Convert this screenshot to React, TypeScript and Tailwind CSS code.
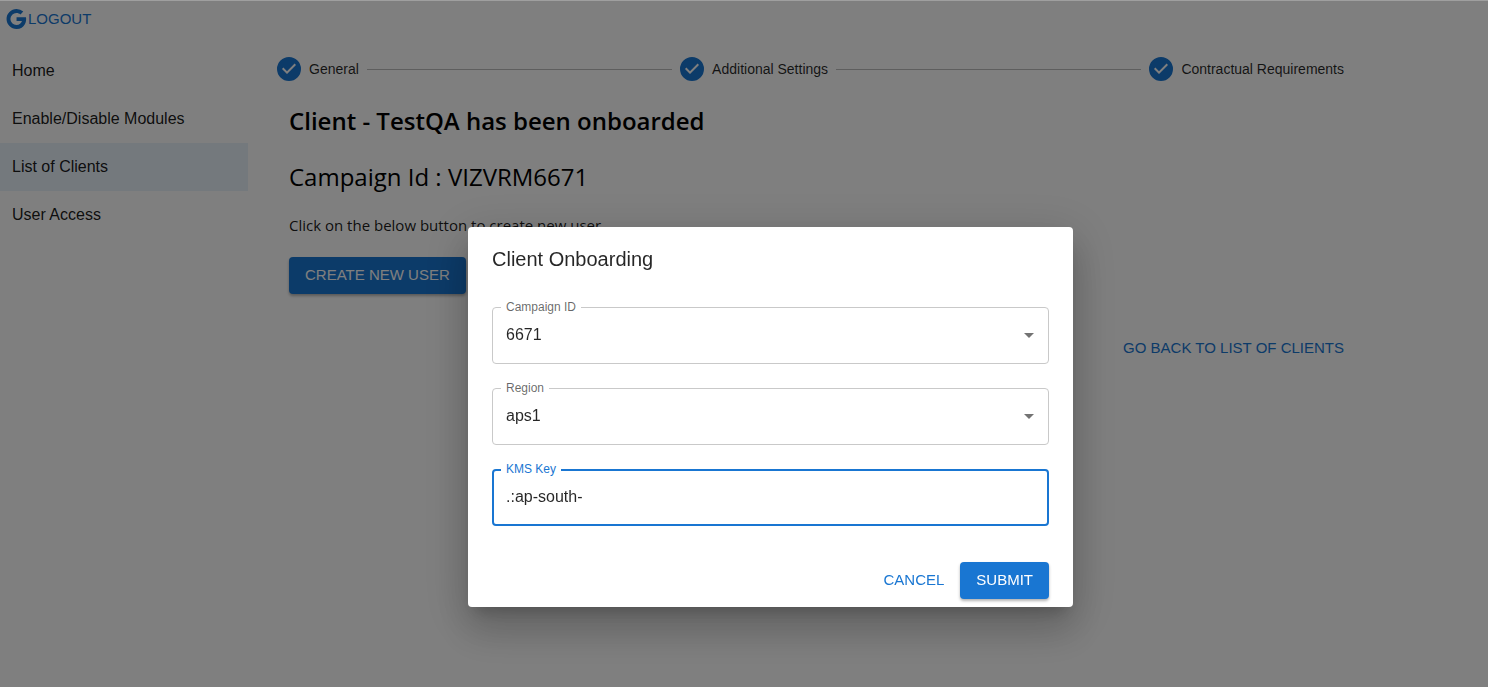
import { Fragment, useState } from "react";
import clsx from "clsx";

const navItems = ["Home", "Enable/Disable Modules", "List of Clients", "User Access"];
const steps = ["General", "Additional Settings", "Contractual Requirements"];

function GoogleIcon() {
  return (
    <svg viewBox="0 0 24 24" className="size-6 shrink-0 fill-current" aria-hidden="true">
      <path d="M12.545 10.239v3.821h5.445c-.712 2.315-2.647 3.972-5.445 3.972a6.033 6.033 0 1 1 0-12.064c1.498 0 2.866.549 3.921 1.453l2.814-2.814A9.969 9.969 0 0 0 12.545 2C7.021 2 2.543 6.477 2.543 12s4.478 10 10.002 10c8.396 0 10.249-7.85 9.426-11.748l-9.426-.013z" />
    </svg>
  );
}

function StepDone() {
  return (
    <svg viewBox="0 0 24 24" className="size-6 shrink-0 fill-[#1976d2]" aria-hidden="true">
      <path d="M12 0a12 12 0 1 0 0 24 12 12 0 0 0 0-24zm-2 17l-5-5 1.4-1.4 3.6 3.6 7.6-7.6L19 8l-9 9z" />
    </svg>
  );
}

function Sidebar({ active }: { active: string }) {
  return (
    <nav className="w-[248px] shrink-0">
      {navItems.map((item) => (
        <a
          key={item}
          href="#"
          className={clsx("flex h-12 items-center px-3 text-base text-black/90", item === active && "bg-[#e8f2fb]")}
        >
          {item}
        </a>
      ))}
    </nav>
  );
}

function Stepper() {
  return (
    <div className="flex items-center gap-2 px-2">
      {steps.map((step, i) => (
        <Fragment key={step}>
          {i > 0 && <span className="h-px flex-1 bg-[#bdbdbd]" />}
          <div className="flex items-center gap-2">
            <StepDone />
            <span className="text-sm text-black/85">{step}</span>
          </div>
        </Fragment>
      ))}
    </div>
  );
}

const labelStyle = "absolute -top-2 left-[9px] bg-white px-[5px] text-xs leading-4";

function SelectField({ id, label, value }: { id: string; label: string; value: string }) {
  return (
    <div className="relative">
      <select
        id={id}
        defaultValue={value}
        className="block h-[57px] w-full appearance-none rounded border border-[#c9c9c9] bg-white px-[13px] text-base text-black/85 outline-none"
      >
        <option>{value}</option>
      </select>
      <label htmlFor={id} className={clsx(labelStyle, "text-black/60")}>
        {label}
      </label>
      <svg
        viewBox="0 0 24 24"
        className="pointer-events-none absolute top-4 right-2 size-6 fill-black/55"
        aria-hidden="true"
      >
        <path d="M7 10l5 5 5-5z" />
      </svg>
    </div>
  );
}

function OnboardingDialog() {
  const [kmsKey, setKmsKey] = useState(".:ap-south-");

  return (
    <div className="fixed inset-0 flex items-center justify-center border-t border-white/25 bg-black/50 pt-[145px] pl-[53px]">
      <form
        role="dialog"
        aria-labelledby="dialog-title"
        className="w-full max-w-[605px] rounded bg-white shadow-[0_11px_15px_-7px_rgba(0,0,0,0.2),0_24px_38px_3px_rgba(0,0,0,0.14),0_9px_46px_8px_rgba(0,0,0,0.12)]"
      >
        <h2 id="dialog-title" className="px-6 py-4 text-xl leading-8 text-black/85">
          Client Onboarding
        </h2>
        <div className="flex flex-col gap-6 px-6 pt-4">
          <SelectField id="campaign" label="Campaign ID" value="6671" />
          <SelectField id="region" label="Region" value="aps1" />
          <div className="relative">
            <input
              id="kms"
              value={kmsKey}
              onChange={(e) => setKmsKey(e.target.value)}
              className="block h-[57px] w-full rounded border-2 border-[#1976d2] px-3 text-base text-black/85 outline-none"
            />
            <label htmlFor="kms" className={clsx(labelStyle, "text-[#1976d2]")}>
              KMS Key
            </label>
          </div>
        </div>
        <div className="flex justify-end gap-2 px-6 pt-9 pb-2">
          <button type="button" className="h-[37px] rounded px-2 text-[15px] text-[#1976d2]">
            CANCEL
          </button>
          <button
            type="button"
            className="h-[37px] rounded bg-[#1976d2] px-4 text-[15px] text-white shadow-[0_2px_3px_rgba(0,0,0,0.3)]"
          >
            SUBMIT
          </button>
        </div>
      </form>
    </div>
  );
}

export default function App() {
  return (
    <div className="min-h-screen bg-white font-['Liberation_Sans',Arial,sans-serif]">
      <header className="flex h-[47px] items-start px-1 pt-[7px]">
        <button type="button" className="flex items-center text-[15px] leading-6 text-[#1976d2]">
          <GoogleIcon />
          LOGOUT
        </button>
      </header>
      <div className="flex">
        <Sidebar active="List of Clients" />
        <main className="flex-1 pt-[10px] pr-[136px] pl-[21px]">
          <Stepper />
          <div className="px-5 pt-5 font-['Open_Sans','Segoe_UI',sans-serif] text-black">
            <h1 className="text-2xl leading-10 font-semibold">Client - TestQA has been onboarded</h1>
            <p className="mt-4 text-2xl leading-10">Campaign Id : VIZVRM6671</p>
            <p className="mt-4 text-[15px] leading-6 text-black/90">Click on the below button to create new user</p>
            <button
              type="button"
              className="mt-5 h-[37px] rounded bg-[#1976d2] px-4 font-['Liberation_Sans',Arial,sans-serif] text-[15px] text-white shadow-[0_2px_3px_rgba(0,0,0,0.3)]"
            >
              CREATE NEW USER
            </button>
          </div>
          <div className="flex justify-end pt-[34px]">
            <a href="#" className="rounded p-2 text-[15px] leading-6 text-[#1976d2]">
              GO BACK TO LIST OF CLIENTS
            </a>
          </div>
        </main>
      </div>
      <OnboardingDialog />
    </div>
  );
}
